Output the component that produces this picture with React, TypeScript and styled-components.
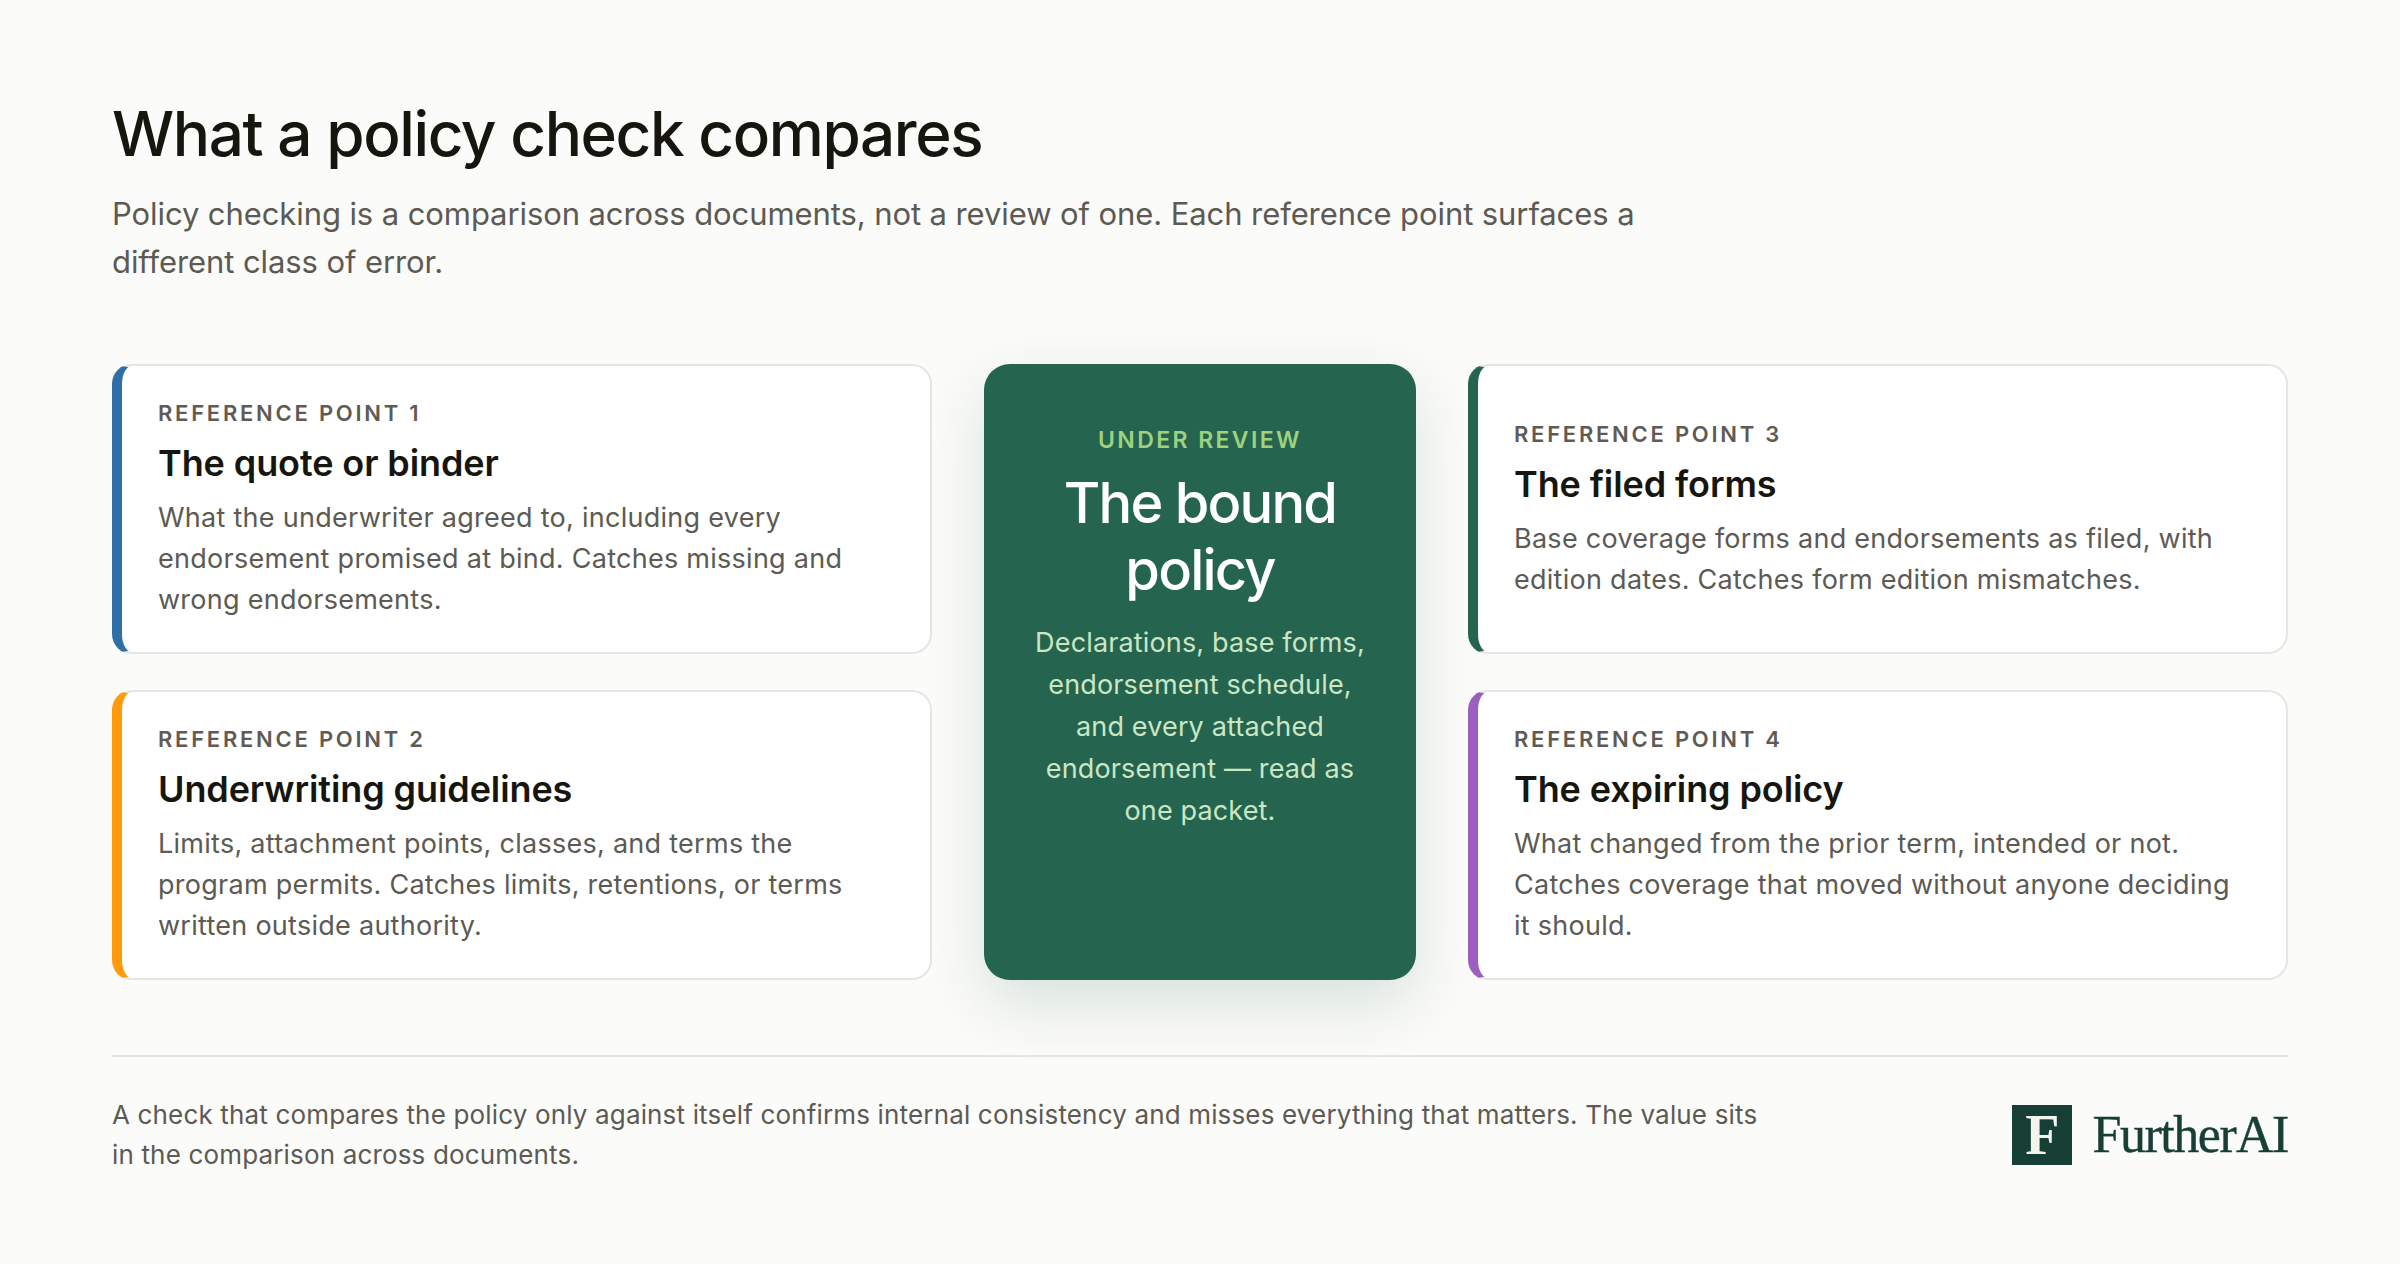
import React from "react";
import styled, { createGlobalStyle } from "styled-components";

const Global = createGlobalStyle`
  html, body { margin: 0; padding: 0; background: #fbfbf9; }
  body { font-family: Inter, "Liberation Sans", sans-serif; }
`;
const Page = styled.main`
  box-sizing: border-box; width: 2400px; height: 1264px; padding: 96px 112px 0;
  display: flex; flex-direction: column; background: #fbfbf9;
`;
const Title = styled.h1`
  margin: 0; font-size: 62px; line-height: 76px; font-weight: 500; letter-spacing: -1.4px; color: #16160f;
`;
const Subtitle = styled.p`
  margin: 18px 0 0; width: 1560px; font-size: 31px; line-height: 48px; font-weight: 400; letter-spacing: -0.09px; color: #5c5a53;
`;
const Grid = styled.section`
  margin-top: 78px; display: grid; grid-template-columns: 820px 432px 820px; grid-template-rows: 290px 290px;
  column-gap: 52px; row-gap: 36px;
`;
const Card = styled.article<{ $accent: string }>`
  box-sizing: border-box; display: flex; flex-direction: column; justify-content: center;
  padding: 0 44px 0 36px; background: #fff; border: 2px solid #e6e6e1; border-left: 10px solid ${p => p.$accent};
  border-radius: 20px;
`;
const Label = styled.div`
  font-size: 22px; line-height: 30px; font-weight: 600; letter-spacing: 2.75px; color: #5f5b54;
`;
const CardTitle = styled.h2`
  margin: 12px 0 11px; font-size: 36px; line-height: 46px; font-weight: 600; letter-spacing: -0.1px; color: #16160f;
`;
const CardBody = styled.p`
  margin: 0; font-size: 27px; line-height: 41px; letter-spacing: 0.27px; color: #5c5a53;
`;
const Center = styled.article`
  grid-column: 2; grid-row: 1 / span 2; box-sizing: border-box; padding: 61px 40px 0; text-align: center;
  background: #256550; border-radius: 26px; box-shadow: 0 24px 60px rgba(37, 101, 80, 0.16);
`;
const CenterLabel = styled.div`
  font-size: 23px; line-height: 30px; font-weight: 600; letter-spacing: 2.4px; color: #9fd17f;
`;
const CenterTitle = styled.h2`
  margin: 15px 0 18px; font-size: 56px; line-height: 67px; font-weight: 500; letter-spacing: -1.8px; color: #fff;
`;
const CenterBody = styled.p`
  margin: 0; font-size: 27px; line-height: 42px; letter-spacing: 0.15px; color: #cbe6c4;
`;
const Footer = styled.footer`
  margin-top: 75px; padding-top: 38px; border-top: 2px solid #e6e6e1;
  display: flex; justify-content: space-between; align-items: center;
`;
const Note = styled.p`
  margin: 0; width: 1660px; font-size: 26px; line-height: 40px; letter-spacing: 0.16px; color: #5c5a53;
`;
const Logo = styled.div`
  display: flex; align-items: center; gap: 20px; color: #173f35; font-family: "Liberation Serif", serif;
`;
const LogoMark = styled.div`
  width: 60px; height: 60px; background: #173f35; color: #f4f4ee; display: flex; align-items: center; justify-content: center;
  font-size: 56px; font-weight: 700; line-height: 1;
`;
const LogoText = styled.div`
  font-size: 52px; line-height: 60px; letter-spacing: -1.45px; word-spacing: -8px; white-space: nowrap; -webkit-text-stroke: 0.4px #173f35;
`;

const cards = [
  { n: 1, accent: "#2e6fa6", title: "The quote or binder", body: "What the underwriter agreed to, including every endorsement promised at bind. Catches missing and wrong endorsements." },
  { n: 3, accent: "#256550", title: "The filed forms", body: "Base coverage forms and endorsements as filed, with edition dates. Catches form edition mismatches." },
  { n: 2, accent: "#ff9a0a", title: "Underwriting guidelines", body: "Limits, attachment points, classes, and terms the program permits. Catches limits, retentions, or terms written outside authority." },
  { n: 4, accent: "#9b5fbf", title: "The expiring policy", body: "What changed from the prior term, intended or not. Catches coverage that moved without anyone deciding it should." },
];

const RefCard = ({ c }: { c: (typeof cards)[number] }) => (
  <Card $accent={c.accent}>
    <Label>REFERENCE POINT {c.n}</Label>
    <CardTitle>{c.title}</CardTitle>
    <CardBody>{c.body}</CardBody>
  </Card>
);

export default function App() {
  return (
    <Page>
      <Global />
      <Title>What a policy check compares</Title>
      <Subtitle>Policy checking is a comparison across documents, not a review of one. Each reference point surfaces a different class of error.</Subtitle>
      <Grid>
        <RefCard c={cards[0]} />
        <Center>
          <CenterLabel>UNDER REVIEW</CenterLabel>
          <CenterTitle>The bound policy</CenterTitle>
          <CenterBody>Declarations, base forms, endorsement schedule, and every attached endorsement — read as one packet.</CenterBody>
        </Center>
        <RefCard c={cards[1]} />
        <RefCard c={cards[2]} />
        <RefCard c={cards[3]} />
      </Grid>
      <Footer>
        <Note>A check that compares the policy only against itself confirms internal consistency and misses everything that matters. The value sits in the comparison across documents.</Note>
        <Logo>
          <LogoMark>F</LogoMark>
          <LogoText>Further AI</LogoText>
        </Logo>
      </Footer>
    </Page>
  );
}
